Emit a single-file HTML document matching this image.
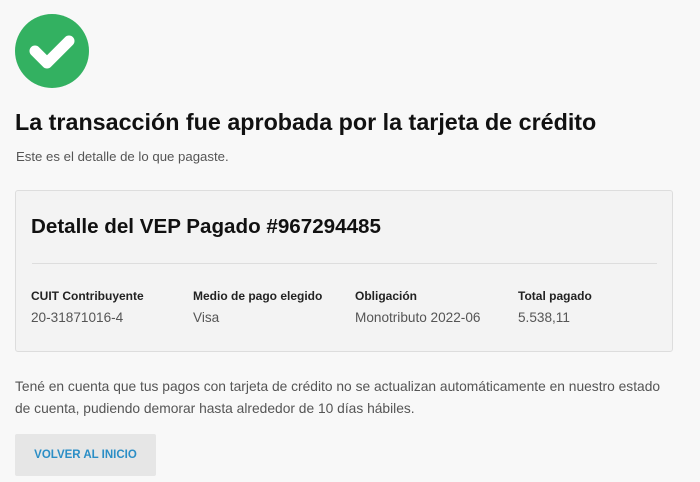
<!DOCTYPE html><html><head><style>
body{margin:0;background:#f8f8f8;font-family:"Liberation Sans",sans-serif;width:700px;height:482px;overflow:hidden;position:relative;color:#222}
.a{position:absolute;white-space:nowrap}
</style></head><body>
<svg class="a" style="left:15px;top:14px" width="74" height="74" viewBox="0 0 74 74"><circle cx="37" cy="37" r="37" fill="#33b161"/><path d="M20 37 L32 49 L54 27" stroke="#fff" stroke-width="11" fill="none" stroke-linecap="round" stroke-linejoin="round"/></svg>
<div class="a" style="left:15px;top:109px;font-size:23.3px;font-weight:bold;color:#111">La transacción fue aprobada por la tarjeta de crédito</div>
<div class="a" style="left:16px;top:149px;font-size:13.2px;color:#555">Este es el detalle de lo que pagaste.</div>
<div class="a" style="left:15px;top:190px;width:656px;height:160px;background:#f3f3f3;border:1px solid #ddd;border-radius:3px"></div>
<div class="a" style="left:31px;top:215px;font-size:20.6px;font-weight:bold;color:#111">Detalle del VEP Pagado #967294485</div>
<div class="a" style="left:32px;top:263px;width:625px;height:1px;background:#ddd"></div>
<div class="a" style="left:31px;top:289px;font-size:12px;font-weight:bold;color:#222">CUIT Contribuyente</div>
<div class="a" style="left:193px;top:289px;font-size:12px;font-weight:bold;color:#222">Medio de pago elegido</div>
<div class="a" style="left:355px;top:289px;font-size:12px;font-weight:bold;color:#222">Obligación</div>
<div class="a" style="left:518px;top:289px;font-size:12px;font-weight:bold;color:#222">Total pagado</div>
<div class="a" style="left:31px;top:310px;font-size:13.6px;color:#555">20-31871016-4</div>
<div class="a" style="left:193px;top:310px;font-size:13.6px;color:#555">Visa</div>
<div class="a" style="left:355px;top:310px;font-size:13.6px;color:#555">Monotributo 2022-06</div>
<div class="a" style="left:518px;top:310px;font-size:13.6px;color:#555">5.538,11</div>
<div class="a" style="left:15px;top:376px;font-size:13.8px;color:#555;line-height:22px">Tené en cuenta que tus pagos con tarjeta de crédito no se actualizan automáticamente en nuestro estado<br>de cuenta, pudiendo demorar hasta alrededor de 10 días hábiles.</div>
<div class="a" style="left:15px;top:434px;width:141px;height:42px;background:#e6e6e6;border-radius:2px;font-size:11.5px;font-weight:bold;color:#2b8ec6;text-align:center;line-height:42px">VOLVER AL INICIO</div>
</body></html>
